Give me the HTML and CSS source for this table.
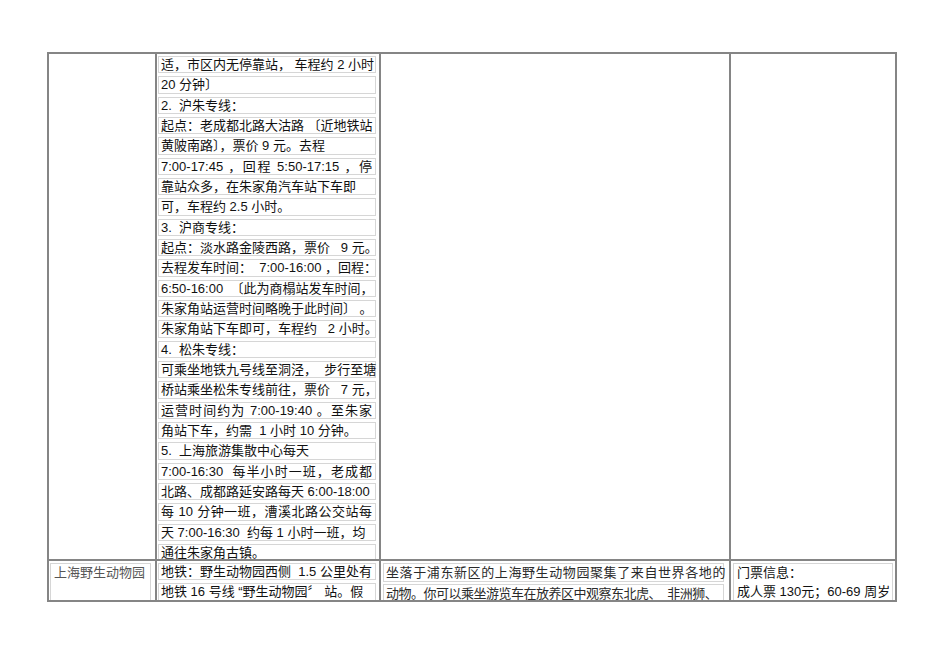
FILE: index.html
```html
<!DOCTYPE html>
<html lang="zh">
<head>
<meta charset="utf-8">
<link rel="stylesheet" href="styles.css">
</head>
<body>
<div class="sheet">
  <div class="cell c1 r1"></div>
  <div class="cell c2 r1">
    <div class="ln">适，市区内无停靠站，&nbsp;车程约 2 小时</div>
    <div class="ln">20 分钟〕</div>
    <div class="ln">2.&nbsp; 沪朱专线：</div>
    <div class="ln">起点：老成都北路大沽路 〔近地铁站</div>
    <div class="ln">黄陂南路〕，票价 9 元。去程</div>
    <div class="ln full">7:00-17:45 ，回程 5:50-17:15 ，停</div>
    <div class="ln">靠站众多，在朱家角汽车站下车即</div>
    <div class="ln">可，车程约 2.5 小时。</div>
    <div class="ln">3.&nbsp; 沪商专线：</div>
    <div class="ln">起点：淡水路金陵西路，票价&nbsp;&nbsp; 9 元。</div>
    <div class="ln">去程发车时间：&nbsp; 7:00-16:00 ，回程：</div>
    <div class="ln">6:50-16:00 &nbsp;〔此为商榻站发车时间，</div>
    <div class="ln">朱家角站运营时间略晚于此时间〕 。</div>
    <div class="ln">朱家角站下车即可，车程约&nbsp;&nbsp; 2 小时。</div>
    <div class="ln">4.&nbsp; 松朱专线：</div>
    <div class="ln">可乘坐地铁九号线至洞泾，&nbsp; 步行至塘</div>
    <div class="ln">桥站乘坐松朱专线前往，票价&nbsp;&nbsp; 7 元，</div>
    <div class="ln full">运营时间约为 7:00-19:40 。至朱家</div>
    <div class="ln">角站下车，约需&nbsp; 1 小时 10 分钟。</div>
    <div class="ln">5.&nbsp; 上海旅游集散中心每天</div>
    <div class="ln full">7:00-16:30&nbsp; 每半小时一班，老成都</div>
    <div class="ln">北路、成都路延安路每天 6:00-18:00</div>
    <div class="ln full">每 10 分钟一班，漕溪北路公交站每</div>
    <div class="ln">天 7:00-16:30&nbsp; 约每 1 小时一班，均</div>
    <div class="ln">通往朱家角古镇。</div>
  </div>
  <div class="cell c3 r1"></div>
  <div class="cell c4 r1"></div>

  <div class="cell c1 r2">
    <div class="tall gray">上海野生动物园</div>
  </div>
  <div class="cell c2 r2">
    <div class="ln">地铁：野生动物园西侧&nbsp; 1.5 公里处有</div>
    <div class="ln">地铁 16 号线 “野生动物园〞 站。假</div>
  </div>
  <div class="cell c3 r2">
    <div class="ln wide spread">坐落于浦东新区的上海野生动物园聚集了来自世界各地的</div>
    <div class="ln wide tight">动物。你可以乘坐游览车在放养区中观察东北虎、&nbsp; 非洲狮、</div>
  </div>
  <div class="cell c4 r2">
    <div class="tall">
      <div class="tl">门票信息：</div>
      <div class="tl">成人票 130元；60-69 周岁</div>
    </div>
  </div>
</div>
</body>
</html>
```

FILE: styles.css
```css
html, body {
  margin: 0;
  padding: 0;
  background: #ffffff;
}

body {
  font-family: "Liberation Sans", "Noto Sans CJK SC", sans-serif;
  font-size: 13px;
  color: #111111;
}

.sheet {
  margin: 52px 0 0 47px;
  width: 850px;
  height: 550px;
  box-sizing: border-box;
  border: 2px solid #858585;
  display: grid;
  grid-template-columns: 108px 224px 350px 1fr;
  grid-template-rows: 507px 1fr;
  overflow: hidden;
}

.cell {
  box-sizing: border-box;
  border-right: 2px solid #858585;
  overflow: hidden;
  padding-top: 2px;
}

.c4 {
  border-right: none;
}

.r1 {
  border-bottom: 2px solid #858585;
}

.c1 {
  padding-left: 1px;
  padding-right: 4px;
}

.c2 {
  padding-left: 1px;
  padding-right: 3px;
}

.c3 {
  padding-left: 2px;
  padding-right: 5px;
}

.c4 {
  padding-left: 2px;
  padding-right: 2px;
}

.ln {
  box-sizing: border-box;
  height: 17.33px;
  margin-bottom: 3px;
  border: 1px solid #d6d6d6;
  padding-left: 2px;
  line-height: 15px;
  white-space: nowrap;
}

.full {
  white-space: normal;
  overflow: hidden;
  padding-right: 3px;
  text-align: justify;
  text-align-last: justify;
}

.wide {
  color: #2a2a2a;
  height: 19px;
  line-height: 17px;
  margin-bottom: 2px;
}

.spread {
  letter-spacing: 0.6px;
}

.tight {
  letter-spacing: -0.5px;
}

.tall {
  box-sizing: border-box;
  height: 60px;
  border: 1px solid #d6d6d6;
  padding: 0 0 0 3px;
  line-height: 18.5px;
  white-space: nowrap;
}

.gray {
  color: #555555;
}

.tl {
  height: 18.5px;
}
```
